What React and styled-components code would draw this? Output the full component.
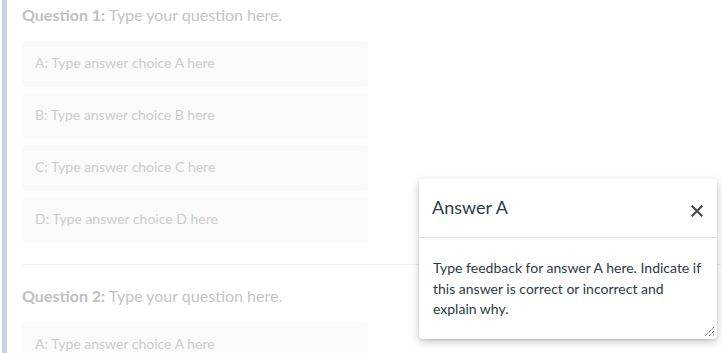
import React from 'react';
import styled, { createGlobalStyle } from 'styled-components';

const GlobalStyle = createGlobalStyle`
  html, body {
    margin: 0;
    padding: 0;
    background: #ffffff;
    overflow: hidden;
  }
  body {
    font-family: Lato, "Noto Sans", sans-serif;
  }
`;

const Page = styled.div`
  position: relative;
  width: 722px;
  height: 353px;
  overflow: hidden;
  background: #ffffff;
`;

const Frame = styled.div`
  margin-left: 2px;
  width: 707px;
  height: 353px;
  border-left: 5px solid #bfd3e3;
  border-right: 5px solid #bfd3e3;
  padding: 5px 0 0 15px;
  box-sizing: content-box;
`;

const Question = styled.section`
  display: flex;
  flex-direction: column;
`;

const QuestionTitle = styled.div`
  font-size: 16px;
  line-height: 20px;
  color: #c4c6c8;
  margin-bottom: 16px;

  strong {
    font-weight: 700;
    color: #bfc1c3;
  }
`;

const Choice = styled.div`
  width: 346px;
  height: 46px;
  box-sizing: border-box;
  display: flex;
  align-items: center;
  padding: 0 0 3px 13px;
  margin-bottom: 6px;
  background: #fafafa;
  border-radius: 4px;
  font-size: 14px;
  color: #cbcdcf;
`;

const Divider = styled.hr`
  border: none;
  border-top: 1px solid #f1f1f1;
  margin: 15px 0 21px 0;
  width: 100%;
`;

const Popover = styled.div`
  position: absolute;
  left: 419px;
  top: 179px;
  width: 298px;
  height: 160px;
  background: #ffffff;
  border-radius: 3px;
  box-shadow: 0 3px 10px rgba(0, 0, 0, 0.22), 0 1px 2px rgba(0, 0, 0, 0.12);
  display: flex;
  flex-direction: column;
`;

const PopHeader = styled.div`
  height: 59px;
  box-sizing: border-box;
  border-bottom: 1px solid #e2e4e6;
  display: flex;
  align-items: center;
  justify-content: space-between;
  padding: 0 14px 0 13px;
`;

const PopTitle = styled.h2`
  margin: 0;
  margin-top: -3px;
  font-size: 18px;
  font-weight: 400;
  color: #2d3b45;
`;

const CloseButton = styled.button`
  border: none;
  background: none;
  padding: 0;
  margin-top: 6px;
  width: 12px;
  height: 12px;
  display: flex;
  cursor: pointer;
`;

const PopBody = styled.div`
  position: relative;
  flex: 1;
  padding: 20px 14px 0 14px;
  font-size: 14px;
  line-height: 20.7px;
  color: #2d3b45;
`;

const Grip = styled.svg`
  position: absolute;
  right: 2px;
  bottom: 2px;
`;

const choices = ['A', 'B', 'C', 'D'];

function QuestionBlock({ number, items }) {
  return (
    <Question>
      <QuestionTitle>
        <strong>Question {number}:</strong> Type your question here.
      </QuestionTitle>
      {items.map(c => (
        <Choice key={c}>{c}: Type answer choice {c} here</Choice>
      ))}
    </Question>
  );
}

export default function App() {
  return (
    <Page>
      <GlobalStyle />
      <Frame>
        <QuestionBlock number={1} items={choices} />
        <Divider />
        {/* only the first choice of question 2 is in view */}
        <QuestionBlock number={2} items={['A']} />
      </Frame>
      <Popover>
        <PopHeader>
          <PopTitle>Answer A</PopTitle>
          <CloseButton aria-label="Close">
            <svg width="12" height="12" viewBox="0 0 12 12">
              <path d="M1.5 1.5 L10.5 10.5 M10.5 1.5 L1.5 10.5" stroke="#4a4a4a" strokeWidth="2.2" strokeLinecap="square" />
            </svg>
          </CloseButton>
        </PopHeader>
        <PopBody>
          Type feedback for answer A here. Indicate if this answer is correct or incorrect and explain why.
          <Grip width="12" height="12" viewBox="0 0 12 12">
            <path d="M11 2 L2 11 M11 6 L6 11 M11 9.5 L9.5 11" stroke="#333" strokeWidth="1" strokeDasharray="1 1" />
          </Grip>
        </PopBody>
      </Popover>
    </Page>
  );
}
